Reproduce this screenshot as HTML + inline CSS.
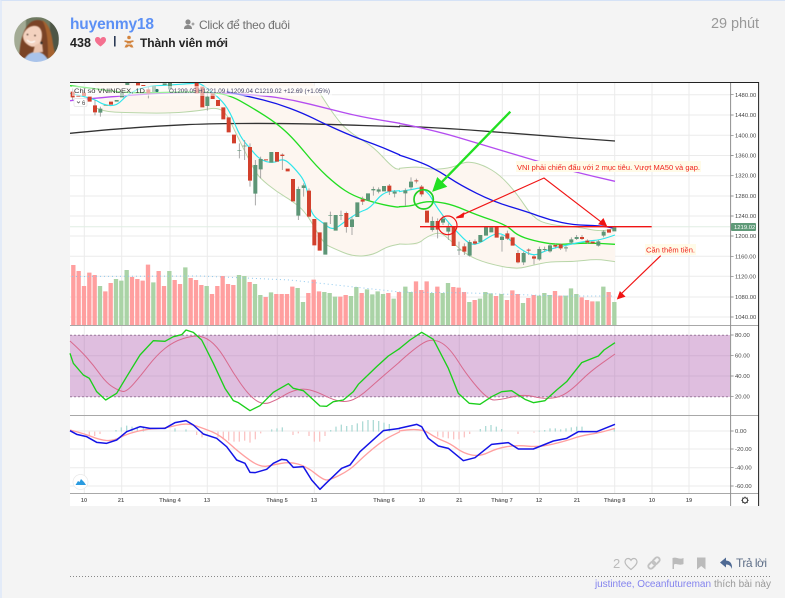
<!DOCTYPE html>
<html><head><meta charset="utf-8">
<style>
html,body{margin:0;padding:0;width:785px;height:598px;overflow:hidden;background:#f4f4f4;font-family:"Liberation Sans",sans-serif}
#edge{position:absolute;left:0;top:0;width:783px;height:597px;border-top:1px solid #d5e2f6;border-left:2px solid #e3ebf8}
svg{position:absolute;left:0;top:0}
#chart{filter:blur(.35px)}
.ax text{font:5.9px "Liberation Sans",sans-serif;fill:#444}
.xl text{font:bold 5.6px "Liberation Sans",sans-serif;fill:#666;text-anchor:middle}
</style></head><body>
<div id="edge"></div>
<svg id="chart" width="785" height="598" viewBox="0 0 785 598" xmlns="http://www.w3.org/2000/svg">
<defs>
<clipPath id="pp"><rect x="70" y="83" width="660" height="242"/></clipPath>
</defs>
<rect x="70" y="82" width="689" height="424" fill="#fff"/>
<!-- grid -->
<path d="M84.3 83V493M121.7 83V493M170 83V493M207.3 83V493M277.3 83V493M314.3 83V493M384 83V493M421.7 83V493M459.3 83V493M502.3 83V493M539.3 83V493M577.3 83V493M614.7 83V493M652 83V493M689 83V493" stroke="#ebebeb" stroke-width="1" fill="none"/>
<path d="M70 94.7H730M70 115H730M70 135.3H730M70 155.5H730M70 175.7H730M70 196H730M70 216H730M70 236H730M70 256.3H730M70 276.3H730M70 297H730M70 317H730M70 431H730M70 449H730M70 467.7H730M70 486H730" stroke="#ebebeb" stroke-width="1" fill="none"/>
<path d="M70 226.7H730" stroke="#e0eee3" stroke-width="1"/>
<!-- RSI band -->
<rect x="70" y="335" width="660" height="62" fill="#dfbedf"/>
<path d="M70 355.7H730M70 376H730M84.3 335V397M121.7 335V397M170 335V397M207.3 335V397M277.3 335V397M314.3 335V397M384 335V397M421.7 335V397M459.3 335V397M502.3 335V397M539.3 335V397M577.3 335V397M614.7 335V397M652 335V397M689 335V397" stroke="#d2b1d3" stroke-width="1"/>
<path d="M70 335.3H730M70 396.7H730" stroke="#9a7a9c" stroke-width="1" stroke-dasharray="2 2"/>
<g clip-path="url(#pp)">
<!-- BB fill -->
<g transform="translate(60,80) scale(.33333)">
<path d="M100 0H750L780 40L830 120L880 165L940 200L1000 265L1020 268V492L980 500L940 525L880 530L820 505L790 490L740 400L700 365L650 335L600 295L580 265L530 165L500 100L470 82L420 92L330 100L200 98L130 95Z" fill="#fdf6f0"/>
</g>
<g transform="translate(400,80) scale(.33333)">
<path d="M-3 265L50 258L100 270L160 262L200 243L250 255L300 285L350 340L400 415L450 435L530 440L600 455L645 445V545L590 537L520 545L450 545L400 555L350 568L260 550L200 525L150 480L120 455L80 470L50 495L-3 492Z" fill="#fdf6f0"/>
</g>
<!-- Left half -->
<g transform="translate(60,80) scale(.33333)" fill="none" stroke-linejoin="round">
<path class="s" d="M780 40L830 120L880 165L940 200L1000 265L1020 268M100 80L130 95L200 98L330 100L420 92L470 82L500 100L530 165L580 265L600 295L650 335L700 365L740 400L790 490L820 505L880 530L940 525L980 500L1020 492" stroke="#b9d6a9" stroke-width="3"/>
<path class="s" d="M30 160L150 148L300 138L440 131L650 130L800 133L1020 140" stroke="#333" stroke-width="4"/>
<path class="s" d="M30 62L200 45L400 35L600 45L700 60L800 85L900 110L1020 130" stroke="#b44df0" stroke-width="4"/>
<path class="s" d="M500 35L570 50L650 70L730 100L790 130L880 170L950 195L1020 225" stroke="#1414e6" stroke-width="4"/>
<path class="s" d="M30 17L100 25L200 40L400 35L500 40L580 85L650 130L700 175L770 260L830 315L880 348L950 370L1010 382L1020 380" stroke="#22dd22" stroke-width="4"/>
<path class="s" d="M30 40L100 55L130 75L170 78L200 45L250 20L330 15L400 10L420 8L480 55L510 95L540 170L570 205L600 240L640 250L670 235L700 260L740 310L750 400L790 430L820 452L860 420L900 395L930 385L970 335L1020 332" stroke="#2fe6ec" stroke-width="3.5"/>
<path d="M38 25V60M105 60V106M121 80V110M265 20V55M442 40V92M538 190V235M554 180V240M570 190V320M586 240V376M602 230V295M667 220V270M715 320V420M731 310V350M747 325V412M811 395V432M843 392V420M859 395V458M876 410V465M908 350V375M940 320V347M956 322V340M988 312V345M1004 330V352" stroke="#999" stroke-width="2.5"/>
<path d="M38 35V52M55 47V50M72 38V48M89 50V65M105 76V97M153 65V74M218 0V8M234 8V16M250 15V18M265 28V40M410 8V40M427 20V82M458 40V57M474 60V78M490 82V118M506 112V157M522 164V190M570 201V302M618 238V241M651 216V245M667 224V228M683 266V274M699 297V364M747 332V410M763 417V496M779 457V512M859 399V441M908 358V365M988 317V334" stroke="#d2402c" stroke-width="12"/>
<path d="M121 86V98M137 75V77M170 60V65M186 35V52M202 8V15M282 18V36M314 10V15M330 8V28M442 50V78M538 211V213M554 197V199M586 255V341M602 237V268M634 216V248M715 327V407M731 316V324M796 427V524M811 406V408M827 405V452M843 406V408M876 418V441M892 367V411M924 340V361M940 327V331M956 328V335M972 318V334M1004 335V341" stroke="#5d9677" stroke-width="12"/>
</g>
<!-- Right half -->
<g transform="translate(400,80) scale(.33333)" fill="none" stroke-linejoin="round">
<path class="s" d="M-3 265L50 258L100 270L160 262L200 243L250 255L300 285L350 340L400 415L450 435L530 440L600 455L645 445M-3 492L50 495L80 470L120 455L150 480L200 525L260 550L350 568L400 555L450 545L520 545L590 537L645 545" stroke="#b9d6a9" stroke-width="3"/>
<path class="s" d="M-3 138L150 145L400 165L645 183" stroke="#333" stroke-width="4"/>
<path class="s" d="M-3 130L100 150L250 195L400 240L520 275L645 304" stroke="#b44df0" stroke-width="4"/>
<path class="s" d="M-3 225L60 245L120 275L180 315L280 365L380 395L450 420L520 435L600 437L645 445" stroke="#1414e6" stroke-width="4"/>
<path class="s" d="M-3 380L30 380L70 365L110 365L160 375L230 405L320 435L350 465L400 482L470 495L560 488L645 493" stroke="#22dd22" stroke-width="4"/>
<path class="s" d="M-3 335L40 328L65 322L90 345L100 365L130 410L170 455L210 495L240 490L280 462L310 460L350 500L400 530L440 510L500 495L560 483L600 480L645 465" stroke="#2fe6ec" stroke-width="3.5"/>
<path d="M16 325V378M33 292V330M49 296V310M65 315V350M97 410V455M113 415V475M129 405V435M145 430V480M177 485V525M193 490V525M209 480V530M225 478V495M306 465V515M322 452V480M354 510V550M371 515V555M386 505V525M402 525V553M418 500V542M434 500V515M450 490V518M466 490V505M482 490V510M498 498V515M514 472V492M530 465V480M546 465V480M562 478V492M595 480V500M611 450V472" stroke="#999" stroke-width="2.5"/>
<path d="M49 301V304M65 320V343M81 392V428M113 423V449M161 440V498M193 499V515M225 484V491M290 441V473M322 460V476M338 472V497M354 519V547M386 509V512M402 529V536M466 495V500M482 493V505M546 471V477M562 482V487M578 485V490M627 448V458" stroke="#d2402c" stroke-width="12"/>
<path d="M16 331V340M33 305V322M97 423V450M129 416V428M145 442V455M177 509V511M209 486V527M241 465V486M258 441V467M274 442V457M306 470V480M371 519V547M418 507V538M434 507V510M450 496V514M498 502V505M514 478V488M530 471V477M595 484V497M611 455V467M643 442V454" stroke="#5d9677" stroke-width="12"/>
</g>
<!-- Volume -->
<g transform="translate(60,260) scale(.33333)" fill="none" stroke-width="13">
<path stroke="#ff9f9f" d="M40 196V15M56 196V33M72 196V78M88 196V38M104 196V45M136 196V94M152 196V69M216 196V51M232 196V57M248 196V62M264 196V14M296 196V33M312 196V78M344 196V60M360 196V72M392 196V54M408 196V60M424 196V75M456 196V102M472 196V78M488 196V48M504 196V72M520 196V75M569 196V66M617 196V111M649 196V102M665 196V102M681 196V102M697 196V80M745 196V99M761 196V59M777 196V94M841 196V110M857 196V105M905 196V99M985 196V99M1017 196V96"/>
<path stroke="#aad3a6" d="M120 196V78M168 196V57M184 196V62M200 196V30M280 196V67M328 196V33M376 196V22M440 196V78M537 196V45M553 196V48M585 196V72M601 196V105M633 196V97M713 196V84M729 196V126M793 196V96M809 196V99M825 196V110M873 196V108M889 196V81M921 196V88M937 196V103M953 196V94M969 196V102M1001 196V116"/>
</g>
<g transform="translate(400,260) scale(.33333)" fill="none" stroke-width="13">
<path stroke="#ff9f9f" d="M48 196V64M64 196V90M80 196V64M112 196V80M160 196V81M176 196V83M192 196V96M224 196V120M288 196V108M321 196V120M337 196V91M353 196V102M385 196V114M401 196V105M465 196V93M481 196V107M545 196V112M561 196V120M577 196V124M626 196V96"/>
<path stroke="#aad3a6" d="M16 196V80M32 196V96M96 196V99M128 196V99M144 196V69M208 196V126M240 196V116M256 196V96M272 196V100M304 196V102M369 196V129M417 196V107M433 196V99M449 196V105M497 196V107M513 196V85M529 196V102M593 196V124M610 196V80M643 196V126"/>
</g>
<path d="M72 276.5L200 276L290 280L400 292L470 293L560 296L612 296" fill="none" stroke="#8fc8ee" stroke-width="1" stroke-dasharray="1 3"/>
</g>
<!-- RSI lines -->
<g transform="translate(60,260) scale(.33333)" fill="none" stroke-linejoin="round">
<path class="s" d="M30 243L60 270L100 315L140 370L180 394L200 395L240 350L290 285L340 245L400 226L440 232L480 270L520 340L570 410L610 435L650 420L690 395L730 385L770 395L820 420L860 427L900 410L950 365L1020 305" stroke="#d86a8e" stroke-width="3"/>
<path d="M30 280L40 310L70 345L88 355L110 395L137 420L170 400L200 350L240 285L280 242L315 244L340 230L365 224L378 210L400 217L425 240L460 310L495 385L520 422L535 428L570 452L600 437L640 397L685 371L700 385L730 392L780 438L800 439L820 425L850 420L880 395L895 373L950 320L985 288L1020 265" stroke="#1bcf1b" stroke-width="4"/>
</g>
<g transform="translate(400,260) scale(.33333)" fill="none" stroke-linejoin="round">
<path class="s" d="M-3 307L60 250L105 236L150 265L200 345L265 420L300 420L370 402L430 417L480 412L520 385L570 335L645 282" stroke="#d86a8e" stroke-width="3"/>
<path d="M-3 267L30 240L65 217L100 238L145 325L175 400L208 430L240 433L275 410L305 395L335 392L375 418L400 428L435 422L470 390L500 365L545 308L575 296L595 288L612 270L645 248" stroke="#1bcf1b" stroke-width="4"/>
</g>
<!-- MACD -->
<g transform="translate(60,410) scale(.33333)" fill="none" stroke-linejoin="round">
<path d="M88 65V78M104 65V78M120 65V72M410 65V75M426 65V82M474 65V82M490 65V88M506 65V92M522 65V95M538 65V95M554 65V92M570 65V98M586 65V88M602 65V70M699 65V75M715 65V70M747 65V78M763 65V95M779 65V95M795 65V78" stroke="#fbc4c4" stroke-width="4"/>
<path d="M168 65V60M184 65V52M200 65V47M216 65V50M232 65V50M250 65V52M345 65V55M378 65V58M635 65V58M651 65V55M667 65V52M812 65V60M828 65V50M844 65V44M860 65V48M876 65V45M892 65V40M908 65V34M924 65V30M940 65V30M956 65V33M972 65V38M988 65V42" stroke="#aedbd6" stroke-width="4"/>
<path class="s" d="M30 60L70 70L120 90L160 93L200 72L260 57L315 55L380 38L430 55L480 75L540 130L600 172L640 165L690 155L740 170L790 210L810 210L870 180L910 140L970 90L1020 65" stroke="#ffa0a0" stroke-width="4"/>
<path d="M30 62L50 73L80 80L110 97L140 100L170 90L200 65L240 50L270 55L315 55L345 38L378 32L400 45L430 72L470 85L500 110L530 150L555 160L570 187L585 188L620 178L640 160L665 148L680 150L700 172L730 170L755 210L780 238L800 218L845 175L870 165L900 125L970 62L1020 55" stroke="#1414e6" stroke-width="4.5"/>
</g>
<g transform="translate(400,410) scale(.33333)" fill="none" stroke-linejoin="round">
<path d="M113 65V80M129 65V82M145 65V85M161 65V88M177 65V88M193 65V82M209 65V72M354 65V72M402 65V68" stroke="#fbc4c4" stroke-width="4"/>
<path d="M241 65V57M257 65V48M273 65V45M289 65V50M305 65V57M418 65V62M434 65V60M450 65V55M466 65V55M482 65V58M498 65V55M514 65V52M530 65V50M546 65V50M643 65V55" stroke="#aedbd6" stroke-width="4"/>
<path class="s" d="M-3 63L60 52L110 85L150 100L190 130L240 140L290 115L350 105L420 112L500 92L540 78L600 68L645 55" stroke="#ffa0a0" stroke-width="4"/>
<path d="M-3 55L50 43L65 50L85 85L115 108L145 115L190 152L225 143L275 103L325 98L355 117L400 117L460 93L500 85L535 65L590 65L645 43" stroke="#1414e6" stroke-width="4.5"/>
</g>
<!-- Annotations -->
<g transform="translate(400,80) scale(.33333)" fill="none">
<path d="M60 440H755" stroke="#f01414" stroke-width="4"/>
<path d="M170 412L432 294L618 437" stroke="#f01414" stroke-width="3.5"/>
<path d="M168 414L192 398L190 412ZM620 438L596 432L610 416Z" fill="#f01414" stroke="#f01414" stroke-width="2"/>
<circle cx="143" cy="436" r="28" stroke="#f01414" stroke-width="3.5"/>
<path d="M331 95L112 320" stroke="#22e022" stroke-width="7"/>
<path d="M98 334L112 293L140 320Z" fill="#22e022" stroke="#22e022" stroke-width="2"/>
<circle cx="71" cy="358" r="29" stroke="#22d022" stroke-width="5"/>
</g>
<path d="M617.3 299L620 291.5L625 296.5Z" fill="#f01414" stroke="#f01414" stroke-width=".6"/>
<path d="M660.7 255.7L620 295" stroke="#f01414" stroke-width="1.2" fill="none"/>
<rect x="516" y="161" width="185" height="11" fill="#fffbe8"/>
<text x="517" y="170" font-size="7.6" fill="#f0241c" textLength="183" lengthAdjust="spacingAndGlyphs">VNI phải chiến đấu với 2 mục tiêu. Vượt MA50 và gap.</text>
<rect x="645" y="244" width="51" height="11" fill="#fffbe8"/>
<text x="646" y="252.5" font-size="7.6" fill="#f0241c" textLength="49" lengthAdjust="spacingAndGlyphs">Cần thêm tiền.</text>
<!-- Legend -->
<rect x="72" y="86" width="260" height="10" fill="#fff" fill-opacity=".55"/>
<text x="74" y="93" font-size="6.6" fill="#333" textLength="71" lengthAdjust="spacingAndGlyphs">Chỉ số VNINDEX, 1D</text>
<circle cx="157" cy="90.5" r="1.6" fill="#267a6a"/>
<text x="169" y="93" font-size="6" fill="#446" textLength="161" lengthAdjust="spacingAndGlyphs">O1209.05 H1221.09 L1209.04 C1219.02 +12.69 (+1.05%)</text>
<rect x="74" y="98.5" width="13" height="8" rx="1.5" fill="#fff" stroke="#e4e4e4" stroke-width=".7"/>
<path d="M77 101.5L78.5 103L80 101.5" stroke="#444" stroke-width=".7" fill="none"/>
<text x="82" y="105" font-size="6" fill="#444">6</text>
<!-- Axes / separators -->
<path d="M70 325.5H759M70 415.5H759M70 493.5H759" stroke="#a8a8a8" stroke-width="1"/>
<path d="M730.6 83V506" stroke="#8f8f8f" stroke-width="1"/>
<path d="M70 82.5H759" stroke="#222" stroke-width="1"/>
<path d="M758.6 82V506" stroke="#222" stroke-width="1"/>
<path d="M730.6 94.7h3M730.6 115h3M730.6 135.3h3M730.6 155.5h3M730.6 175.7h3M730.6 196h3M730.6 216h3M730.6 236h3M730.6 256.3h3M730.6 276.3h3M730.6 297h3M730.6 317h3M730.6 335h3M730.6 355.7h3M730.6 376h3M730.6 396.7h3M730.6 431h3M730.6 449h3M730.6 467.7h3M730.6 486h3" stroke="#777" stroke-width=".7"/>
<g class="ax">
<text x="735" y="96.8">1480.00</text><text x="735" y="117">1440.00</text><text x="735" y="137.3">1400.00</text><text x="735" y="157.5">1360.00</text><text x="735" y="177.7">1320.00</text><text x="735" y="198">1280.00</text><text x="735" y="218">1240.00</text><text x="735" y="238">1200.00</text><text x="735" y="258.3">1160.00</text><text x="735" y="278.3">1120.00</text><text x="735" y="299">1080.00</text><text x="735" y="319">1040.00</text>
<text x="735" y="337">80.00</text><text x="735" y="357.7">60.00</text><text x="735" y="378">40.00</text><text x="735" y="398.7">20.00</text>
<text x="735" y="433">0.00</text><text x="735" y="451">-20.00</text><text x="735" y="469.7">-40.00</text><text x="735" y="488">-60.00</text>
</g>
<rect x="731" y="223" width="25" height="8" rx="1" fill="#5f9a78"/>
<text x="734" y="229.2" font-size="5.9" fill="#fff">1219.02</text>
<g class="xl">
<text x="84" y="502">10</text><text x="121" y="502">21</text><text x="170" y="502">Tháng 4</text><text x="207" y="502">13</text><text x="277" y="502">Tháng 5</text><text x="314" y="502">13</text><text x="384" y="502">Tháng 6</text><text x="421.7" y="502">10</text><text x="459.3" y="502">21</text><text x="502" y="502">Tháng 7</text><text x="539" y="502">12</text><text x="577" y="502">21</text><text x="614.7" y="502">Tháng 8</text><text x="652" y="502">10</text><text x="689" y="502">19</text>
</g>
<circle cx="745" cy="500.3" r="2.6" fill="none" stroke="#333" stroke-width="1"/>
<path d="M745 496.6v1.2M745 502.8v1.2M741.3 500.3h1.2M747.5 500.3h1.2M742.4 497.7l.8.8M746.8 502.1l.8.8M747.6 497.7l-.8.8M743.2 502.1l-.8.8" stroke="#333" stroke-width=".9"/>
<!-- logo -->
<circle cx="80.5" cy="482" r="7.5" fill="#fff" stroke="#e8e8e8" stroke-width=".7"/>
<path d="M75.5 485L78 481L79.5 482L81 479L84 482L86 485Z" fill="#2a9be0"/>
<path d="M76 485.5H85.5" stroke="#fff" stroke-width=".7"/>
</svg>

<svg width="785" height="598" viewBox="0 0 785 598" xmlns="http://www.w3.org/2000/svg">
<defs><clipPath id="av"><circle cx="36.5" cy="39.5" r="22.5"/></clipPath></defs>
<!-- avatar -->
<g clip-path="url(#av)" style="filter:blur(.5px)">
<rect x="14" y="17" width="45" height="45" fill="#6f7a62"/>
<rect x="14" y="17" width="12" height="45" fill="#a3ab95"/>
<rect x="50" y="17" width="9" height="45" fill="#4e5646"/>
<path d="M19 58C20 46 21 30 31 22C41 16 50 24 51 36C52 44 54 50 56 58Z" fill="#7a4326"/>
<path d="M42 20C50 24 52 36 53 44C54 50 55 54 57 58L48 58C48 46 48 30 42 20Z" fill="#a5622f"/>
<path d="M23 36C24 30 30 25 36 26C42 27 43 35 41 41C39 46 34 48 30 46C26 44 23 41 23 36Z" fill="#f3d2bf"/>
<path d="M24 60C27 54 31 52 36 52C41 52 45 54 48 60L48 64H24Z" fill="#a9c3ea"/>
<path d="M35 45L42 42L43 52L33 53Z" fill="#eac3ad"/>
<path d="M27 40Q31 44 35 41" stroke="#fff" stroke-width="1.2" fill="none"/>
<circle cx="27.5" cy="34.5" r=".8" fill="#3a2418"/><circle cx="35" cy="35.5" r=".8" fill="#3a2418"/>
<circle cx="41.5" cy="43" r="1.2" fill="#2c2c2c"/>
</g>
<text x="70" y="29" font-size="15.5" font-weight="bold" fill="#5c90f5" textLength="84" lengthAdjust="spacing">huyenmy18</text>
<!-- follow icon -->
<circle cx="188" cy="22" r="2.6" fill="#8a8a8a"/>
<path d="M184 29C184 26 186 25 188 25C190 25 192 26 192 29Z" fill="#8a8a8a"/>
<path d="M193 22.5v3M191.5 24h3" stroke="#8a8a8a" stroke-width="1"/>
<text x="199" y="29" font-size="12" fill="#707070" textLength="91" lengthAdjust="spacing">Click để theo đuôi</text>
<text x="70" y="47" font-size="12.5" font-weight="bold" fill="#222" textLength="21" lengthAdjust="spacing">438</text>
<path d="M100.5 46.5C96 43 95 41.5 95 39.7C95 38 96.3 37 97.6 37C98.9 37 100 37.8 100.5 39C101 37.8 102.1 37 103.4 37C104.7 37 106 38 106 39.7C106 41.5 105 43 100.5 46.5Z" fill="#f4708f"/>
<rect x="114" y="36" width="1.6" height="10.5" fill="#2b3a55"/>
<g fill="#d2843e">
<circle cx="129" cy="37.5" r="1.8"/>
<path d="M124.5 40.5C126 40 127.5 41 129 41C130.5 41 132 40 133.5 40.5L133.5 42C132 42 131 42.3 131 43.5L127 43.5C127 42.3 126 42 124.5 42Z"/>
<path d="M126 44.5H132L133.5 47.5H131L129 46L127 47.5H124.5Z"/>
</g>
<text x="140" y="47" font-size="12" font-weight="bold" fill="#222" textLength="88" lengthAdjust="spacing">Thành viên mới</text>
<text x="711" y="28" font-size="14.5" fill="#999" textLength="48" lengthAdjust="spacing">29 phút</text>
<!-- footer actions -->
<text x="613" y="568" font-size="13" fill="#bbb">2</text>
<path d="M631 569.5C626.5 566 625 564 625 561.7C625 559.8 626.5 558.5 628.1 558.5C629.3 558.5 630.4 559.2 631 560.3C631.6 559.2 632.7 558.5 633.9 558.5C635.5 558.5 637 559.8 637 561.7C637 564 635.5 566 631 569.5Z" fill="none" stroke="#bbb" stroke-width="1.2"/>
<g transform="rotate(-45 654 563)" fill="none" stroke="#c2c2c2" stroke-width="1.9">
<rect x="647" y="560.5" width="8" height="5" rx="2.5"/>
<rect x="653" y="560.5" width="8" height="5" rx="2.5"/>
</g>
<path d="M672.5 558V569H674V564.5C676.5 563 679 566 683.5 564V558C679 560 676.5 556.5 672.5 558Z" fill="#bbb"/>
<path d="M697 557.5H705.5V569.5L701.2 566L697 569.5Z" fill="#bbb"/>
<path d="M726 557.5L720 562.5L726 567.5V564.5C729 564.5 731 566 732 569C732.5 563.5 730 560.7 726 560.5Z" fill="#4f6a94"/>
<text x="736" y="567" font-size="12" fill="#5f6f88" textLength="31" lengthAdjust="spacing">Trả lời</text>
<path d="M70 576.5H771" stroke="#888" stroke-width="1" stroke-dasharray="1 2"/>
<text x="595" y="587" font-size="10" fill="#8484ee" textLength="116" lengthAdjust="spacing">justintee, Oceanfutureman</text>
<text x="714" y="587" font-size="10" fill="#999" textLength="57" lengthAdjust="spacing">thích bài này</text>
</svg>
<script>
document.querySelectorAll('path.s').forEach(function(p){
  var out='';
  p.getAttribute('d').split('M').forEach(function(seg){
    if(!seg.trim())return;
    var pts=seg.split('L').map(function(s){return s.trim().split(/\s+/).map(Number)});
    out+='M'+pts[0][0]+' '+pts[0][1];
    for(var i=1;i<pts.length-1;i++){
      var mx=(pts[i][0]+pts[i+1][0])/2,my=(pts[i][1]+pts[i+1][1])/2;
      out+='Q'+pts[i][0]+' '+pts[i][1]+' '+mx+' '+my;
    }
    var l=pts[pts.length-1];
    out+='L'+l[0]+' '+l[1];
  });
  p.setAttribute('d',out);
});
</script>
</body></html>
